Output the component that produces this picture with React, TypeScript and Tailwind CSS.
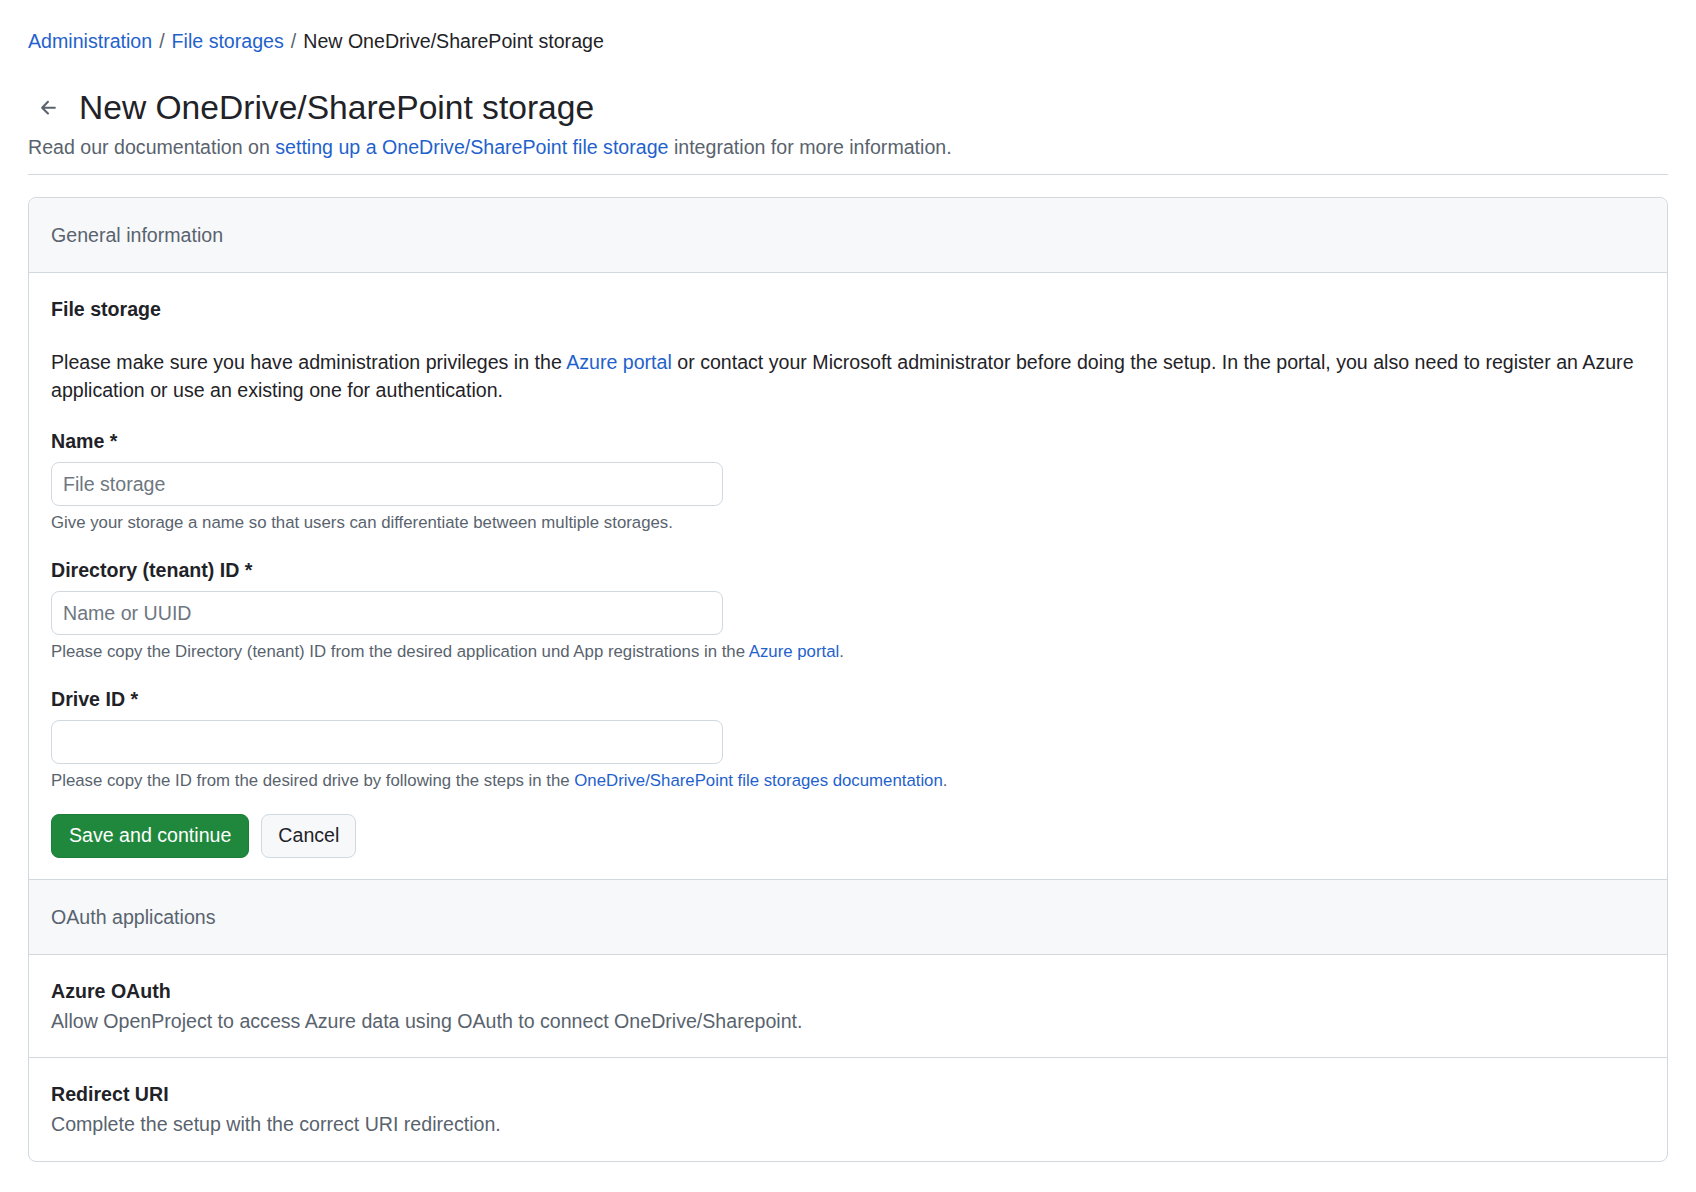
import React from 'react';

const link = 'text-[#1f62cc] hover:underline';

function ArrowLeft() {
  return (
    <svg viewBox="0 0 16 16" className="w-[22px] h-[22px] fill-[#59636e]" aria-hidden="true">
      <path d="M7.78 12.53a.75.75 0 0 1-1.06 0L2.47 8.28a.75.75 0 0 1 0-1.06l4.25-4.25a.751.751 0 0 1 1.042.018.751.751 0 0 1 .018 1.042L4.81 7h7.44a.75.75 0 0 1 0 1.5H4.81l2.97 2.97a.75.75 0 0 1 0 1.06Z" />
    </svg>
  );
}

interface FieldProps {
  label: string;
  placeholder?: string;
  hint: React.ReactNode;
  first?: boolean;
}

function Field({ label, placeholder, hint, first }: FieldProps) {
  return (
    <div className={first ? 'mt-[23px]' : 'mt-[21px]'}>
      <label className="block font-bold leading-[28px] text-[#1f2328]">{label}</label>
      <input
        type="text"
        placeholder={placeholder}
        className="mt-[7px] block w-[672px] h-[44px] rounded-[8px] border border-[#d1d9e0] bg-white pl-[11px] pr-[12px] text-[19.6px] text-[#1f2328] placeholder:text-[#6e7781] outline-none"
      />
      <p className="mt-[5px] text-[16.8px] leading-[24px] text-[#59636e]">{hint}</p>
    </div>
  );
}

function SectionHeader({ title, top }: { title: string; top?: boolean }) {
  return (
    <div
      className={`bg-[#f6f8fa] border-b border-[#d1d9e0] px-[22px] py-[23px] leading-[28px] text-[#59636e] ${
        top ? 'rounded-t-[8px]' : 'border-t'
      }`}
    >
      {title}
    </div>
  );
}

export default function App() {
  return (
    <div className="min-h-screen bg-white px-[28px] pt-[27px] pb-[28px] font-['Liberation_Sans',Arial,sans-serif] text-[19.6px] text-[#1f2328]">
      {/* Breadcrumb */}
      <nav className="flex items-center leading-[28px]">
        <a href="#" className={link}>Administration</a>
        <span className="mx-[7px] text-[#59636e]">/</span>
        <a href="#" className={link}>File storages</a>
        <span className="mx-[7px] text-[#59636e]">/</span>
        <span>New OneDrive/SharePoint storage</span>
      </nav>

      {/* Page header */}
      <div className="border-b border-[#d1d9e0] pb-[13px]">
        <div className="mt-[32px] flex items-center">
          <button className="ml-[10px] flex items-center justify-center">
            <ArrowLeft />
          </button>
          <h1 className="ml-[19px] text-[33.6px] leading-[42px] font-normal">New OneDrive/SharePoint storage</h1>
        </div>
        <p className="mt-[4px] leading-[28px] text-[#59636e]">
          Read our documentation on{' '}
          <a href="#" className={link}>setting up a OneDrive/SharePoint file storage</a>{' '}
          integration for more information.
        </p>
      </div>

      {/* Box */}
      <div className="mt-[22px] rounded-[8px] border border-[#d1d9e0]">
        <SectionHeader title="General information" top />

        <div className="px-[22px] pt-[22px] pb-[21px]">
          <h3 className="font-bold leading-[28px]">File storage</h3>
          <p className="mt-[25px] leading-[28px]">
            Please make sure you have administration privileges in the{' '}
            <a href="#" className={link}>Azure portal</a> or contact your Microsoft administrator before doing the
            setup. In the portal, you also need to register an Azure application or use an existing one for
            authentication.
          </p>

          <Field
            first
            label="Name *"
            placeholder="File storage"
            hint="Give your storage a name so that users can differentiate between multiple storages."
          />
          <Field
            label="Directory (tenant) ID *"
            placeholder="Name or UUID"
            hint={
              <>
                Please copy the Directory (tenant) ID from the desired application und App registrations in the{' '}
                <a href="#" className={link}>Azure portal</a>.
              </>
            }
          />
          <Field
            label="Drive ID *"
            hint={
              <>
                Please copy the ID from the desired drive by following the steps in the{' '}
                <a href="#" className={link}>OneDrive/SharePoint file storages documentation</a>.
              </>
            }
          />

          <div className="mt-[21px] flex gap-[12px]">
            <button className="h-[44px] rounded-[8px] border border-[#1a7f37] bg-[#1f883d] px-[17px] text-white">
              Save and continue
            </button>
            <button className="h-[44px] rounded-[8px] border border-[#d1d9e0] bg-[#f6f8fa] px-[16px] text-[#1f2328]">
              Cancel
            </button>
          </div>
        </div>

        <SectionHeader title="OAuth applications" />

        <div className="border-b border-[#d1d9e0] px-[22px] pt-[22px] pb-[21px]">
          <h4 className="font-bold leading-[29px]">Azure OAuth</h4>
          <p className="leading-[30px] text-[#59636e]">
            Allow OpenProject to access Azure data using OAuth to connect OneDrive/Sharepoint.
          </p>
        </div>
        <div className="px-[22px] pt-[22px] pb-[22px]">
          <h4 className="font-bold leading-[29px]">Redirect URI</h4>
          <p className="leading-[30px] text-[#59636e]">Complete the setup with the correct URI redirection.</p>
        </div>
      </div>
    </div>
  );
}
